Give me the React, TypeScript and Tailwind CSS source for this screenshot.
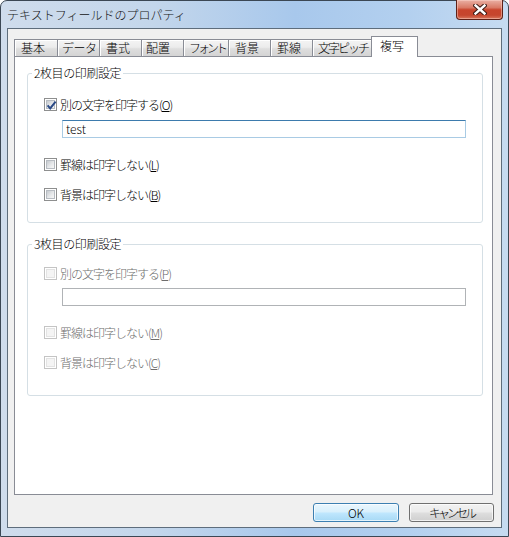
import clsx from 'clsx'

const jp = "font-['Noto_Sans_CJK_JP','Noto_Sans',sans-serif] font-light"

interface BoxProps {
  checked?: boolean
  disabled?: boolean
}

function CheckBox({ checked, disabled }: BoxProps) {
  return (
    <span
      className={clsx(
        'relative block w-[13px] h-[13px] shrink-0 border bg-white p-[1px]',
        disabled ? 'border-[#c4c4c4]' : 'border-[#8e8f8f]',
      )}
    >
      <span
        className={clsx(
          'block w-full h-full border',
          disabled
            ? 'border-[#e3e3e3] bg-[#f4f4f4]'
            : 'border-[#b7bcc2] bg-[linear-gradient(135deg,#c6cacf,#e6e8ea_55%,#f7f7f7)]',
        )}
      />
      {checked && (
        <svg
          className="absolute left-[1px] top-[1px]"
          width="11"
          height="11"
          viewBox="0 0 11 11"
        >
          <path
            d="M1.6 5.4 L4.2 8.4 L9.6 1.6"
            fill="none"
            stroke="#2b4a86"
            strokeWidth="2"
          />
        </svg>
      )}
    </span>
  )
}

interface RowProps {
  label: string
  mnemonic: string
  checked?: boolean
  disabled?: boolean
  className?: string
}

function CheckRow({ label, mnemonic, checked, disabled, className }: RowProps) {
  return (
    <div className={clsx('flex h-[13px] items-center gap-[3px]', className)}>
      <CheckBox checked={checked} disabled={disabled} />
      <span
        className={clsx(
          'text-[12px] leading-[14px] tracking-[-1px] whitespace-nowrap',
          disabled ? 'text-[#6d6d6d]' : 'text-black',
        )}
      >
        {label}(<span className="underline underline-offset-[1px]">{mnemonic}</span>)
      </span>
    </div>
  )
}

interface GroupProps {
  title: string
  disabled?: boolean
  value: string
  keys: [string, string, string]
  className?: string
}

function Group({ title, disabled, value, keys, className }: GroupProps) {
  return (
    <div
      className={clsx(
        'relative rounded-[3px] border border-[#d5dfe5] pl-[16px]',
        disabled ? 'h-[152px] pt-[22px]' : 'h-[150px] pt-[24px]',
        className,
      )}
    >
      <span className="absolute left-[4px] top-[-8px] bg-white px-[2px] text-[12px] leading-[14px] tracking-[-0.4px] text-black">
        {title}
      </span>
      <CheckRow
        label="別の文字を印字する"
        mnemonic={keys[0]}
        checked={!disabled}
        disabled={disabled}
      />
      <div
        className={clsx(
          'ml-[18px] flex h-[18px] w-[404px] items-center border bg-white px-[3px] text-[12px] text-black',
          disabled
            ? 'mt-[8px] border-[#b0b3b6]'
            : 'mt-[9px] border-[#a9cbe4] border-t-[#3d7bad]',
        )}
      >
        {value}
      </div>
      <CheckRow
        label="罫線は印字しない"
        mnemonic={keys[1]}
        disabled={disabled}
        className="mt-[20px]"
      />
      <CheckRow
        label="背景は印字しない"
        mnemonic={keys[2]}
        disabled={disabled}
        className="mt-[17px]"
      />
    </div>
  )
}

const tabs = [
  { label: '基本', w: 'w-[43px]', t: 'pl-[6px]' },
  { label: 'データ', w: 'w-[42px]', t: 'pl-[4px] tracking-[-0.5px]' },
  { label: '書式', w: 'w-[42px]', t: 'pl-[6px]' },
  { label: '配置', w: 'w-[42px]', t: 'pl-[4px]' },
  { label: 'フォント', w: 'w-[45px]', t: 'pl-[5px] tracking-[-3px]' },
  { label: '背景', w: 'w-[42px]', t: 'pl-[6px]' },
  { label: '罫線', w: 'w-[42px]', t: 'pl-[6px]' },
  { label: '文字ピッチ', w: 'w-[59px]', t: 'pl-[5px] tracking-[-2px]' },
]

export default function App() {
  return (
    <div
      className={clsx(
        'flex h-[537px] w-[509px] flex-col rounded-t-[7px] border border-[#3b4754] bg-[linear-gradient(to_right,#cfdcec_0%,#c3d6eb_30%,#a8c8ec_58%,#b3d0ef_80%,#c6dbf1_100%)]',
        jp,
      )}
    >
      {/* title bar */}
      <div className="flex h-[27px] shrink-0 items-center pl-[6px]">
        <span className="text-[12px] leading-[14px] text-[#141414]">
          テキストフィールドのプロパティ
        </span>
        <div className="-mt-px ml-auto mr-[5px] flex h-[20px] w-[47px] items-center justify-center self-start rounded-b-[4px] border border-t-0 border-[#5e2118] bg-[linear-gradient(#eab0a4,#d97a66_40%,#c8442c_52%,#c5462e_80%,#d9775d)] shadow-[inset_0_0_0_1px_rgba(255,220,210,0.45)]">
          <svg width="14" height="11" viewBox="0 0 14 11">
            <path d="M2.5 1.5 L11.5 9.5 M11.5 1.5 L2.5 9.5" stroke="#3d1a14" strokeWidth="4.4" strokeLinecap="square" />
            <path d="M2.5 1.5 L11.5 9.5 M11.5 1.5 L2.5 9.5" stroke="#ffffff" strokeWidth="2.4" strokeLinecap="square" />
          </svg>
        </div>
      </div>

      {/* client */}
      <div className="mx-[6px] mb-[8px] flex flex-1 flex-col border border-[#5e6d7c] bg-[#f0f0f0] pl-[6px] pr-[8px] pt-[7px]">
        <div className="flex h-[20px] items-end">
          {tabs.map((t) => (
            <div
              key={t.label}
              className={clsx(
                'flex h-[17px] items-center overflow-hidden border-l border-t border-[#898c95] bg-[linear-gradient(#f4f4f4,#ececec_45%,#dedede_55%,#d4d4d4)] text-[12px] leading-[14px] text-black whitespace-nowrap shadow-[inset_1px_1px_0_#ffffff]',
                t.w,
                t.t,
              )}
            >
              {t.label}
            </div>
          ))}
          <div className="relative z-10 -mb-px flex h-[21px] w-[47px] items-center border border-b-0 border-[#898c95] bg-white pb-[2px] pl-[8px] text-[12px] leading-[14px] text-black">
            複写
          </div>
        </div>

        <div className="h-[439px] border border-[#898c95] bg-white pl-[12px] pr-[9px] pt-[16px]">
          <Group title="2枚目の印刷設定" value="test" keys={['O', 'L', 'B']} />
          <Group
            title="3枚目の印刷設定"
            value=""
            disabled
            keys={['P', 'M', 'C']}
            className="mt-[21px]"
          />
        </div>

        <div className="mt-[8px] flex h-[19px] justify-end gap-[10px]">
          <div className="flex w-[86px] items-center justify-center rounded-[3px] border border-[#3c7fb1] bg-[linear-gradient(#eaf6fd,#d9f0fc_45%,#bee6fd_55%,#a7d9f5)] text-[12px] leading-[14px] text-black shadow-[inset_0_0_0_1px_rgba(255,255,255,0.7)]">
            OK
          </div>
          <div className="mr-[-1px] flex w-[85px] items-center justify-center rounded-[3px] border border-[#707070] bg-[linear-gradient(#f2f2f2,#ebebeb_45%,#dddddd_55%,#cfcfcf)] text-[12px] leading-[14px] tracking-[-3px] text-black shadow-[inset_0_0_0_1px_rgba(255,255,255,0.7)]">
            キャンセル
          </div>
        </div>
      </div>
    </div>
  )
}
